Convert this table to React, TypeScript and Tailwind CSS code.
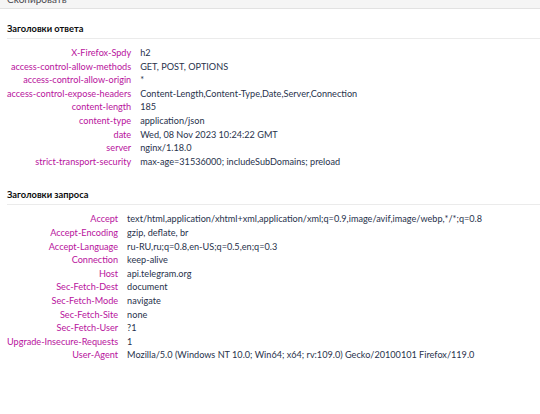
import React from 'react';

const responseHeaders: [string, string][] = [
  ['X-Firefox-Spdy', 'h2'],
  ['access-control-allow-methods', 'GET, POST, OPTIONS'],
  ['access-control-allow-origin', '*'],
  ['access-control-expose-headers', 'Content-Length,Content-Type,Date,Server,Connection'],
  ['content-length', '185'],
  ['content-type', 'application/json'],
  ['date', 'Wed, 08 Nov 2023 10:24:22 GMT'],
  ['server', 'nginx/1.18.0'],
  ['strict-transport-security', 'max-age=31536000; includeSubDomains; preload'],
];

const requestHeaders: [string, string][] = [
  ['Accept', 'text/html,application/xhtml+xml,application/xml;q=0.9,image/avif,image/webp,*/*;q=0.8'],
  ['Accept-Encoding', 'gzip, deflate, br'],
  ['Accept-Language', 'ru-RU,ru;q=0.8,en-US;q=0.5,en;q=0.3'],
  ['Connection', 'keep-alive'],
  ['Host', 'api.telegram.org'],
  ['Sec-Fetch-Dest', 'document'],
  ['Sec-Fetch-Mode', 'navigate'],
  ['Sec-Fetch-Site', 'none'],
  ['Sec-Fetch-User', '?1'],
  ['Upgrade-Insecure-Requests', '1'],
  ['User-Agent', 'Mozilla/5.0 (Windows NT 10.0; Win64; x64; rv:109.0) Gecko/20100101 Firefox/119.0'],
];

function HeaderSection({ title, rows, className }: { title: string; rows: [string, string][]; className?: string }) {
  return (
    <section className={className}>
      <h2 className="ml-[7px] pb-[2px] border-b border-[#ebebeb] text-[9.3px] leading-[14px] font-bold text-[#0c0c0d]">
        {title}
      </h2>
      <table className="mt-[7px] ml-[7px] border-collapse">
        <tbody>
          {rows.map(([name, value]) => (
            <tr key={name} className="h-[13.6px] leading-[13.6px]">
              <td className="text-right pr-[9px] text-[#b8129d] whitespace-nowrap align-middle">{name}</td>
              <td className="text-[#28324c] whitespace-nowrap align-middle">{value}</td>
            </tr>
          ))}
        </tbody>
      </table>
    </section>
  );
}

export default function App() {
  return (
    <div className="w-[540px] h-[414px] overflow-hidden bg-white text-[9.15px] font-['Lato',sans-serif]">
      <div className="h-[9px] overflow-hidden bg-[#f5f5f5] border-b border-[#e2e2e2]">
        <div className="-mt-[8px] ml-[7px] leading-[14px] text-[10px] text-[#4a4a4f]">Скопировать</div>
      </div>
      <HeaderSection title="Заголовки ответа" rows={responseHeaders} className="mt-[13px]" />
      <HeaderSection title="Заголовки запроса" rows={requestHeaders} className="mt-[20px]" />
    </div>
  );
}
